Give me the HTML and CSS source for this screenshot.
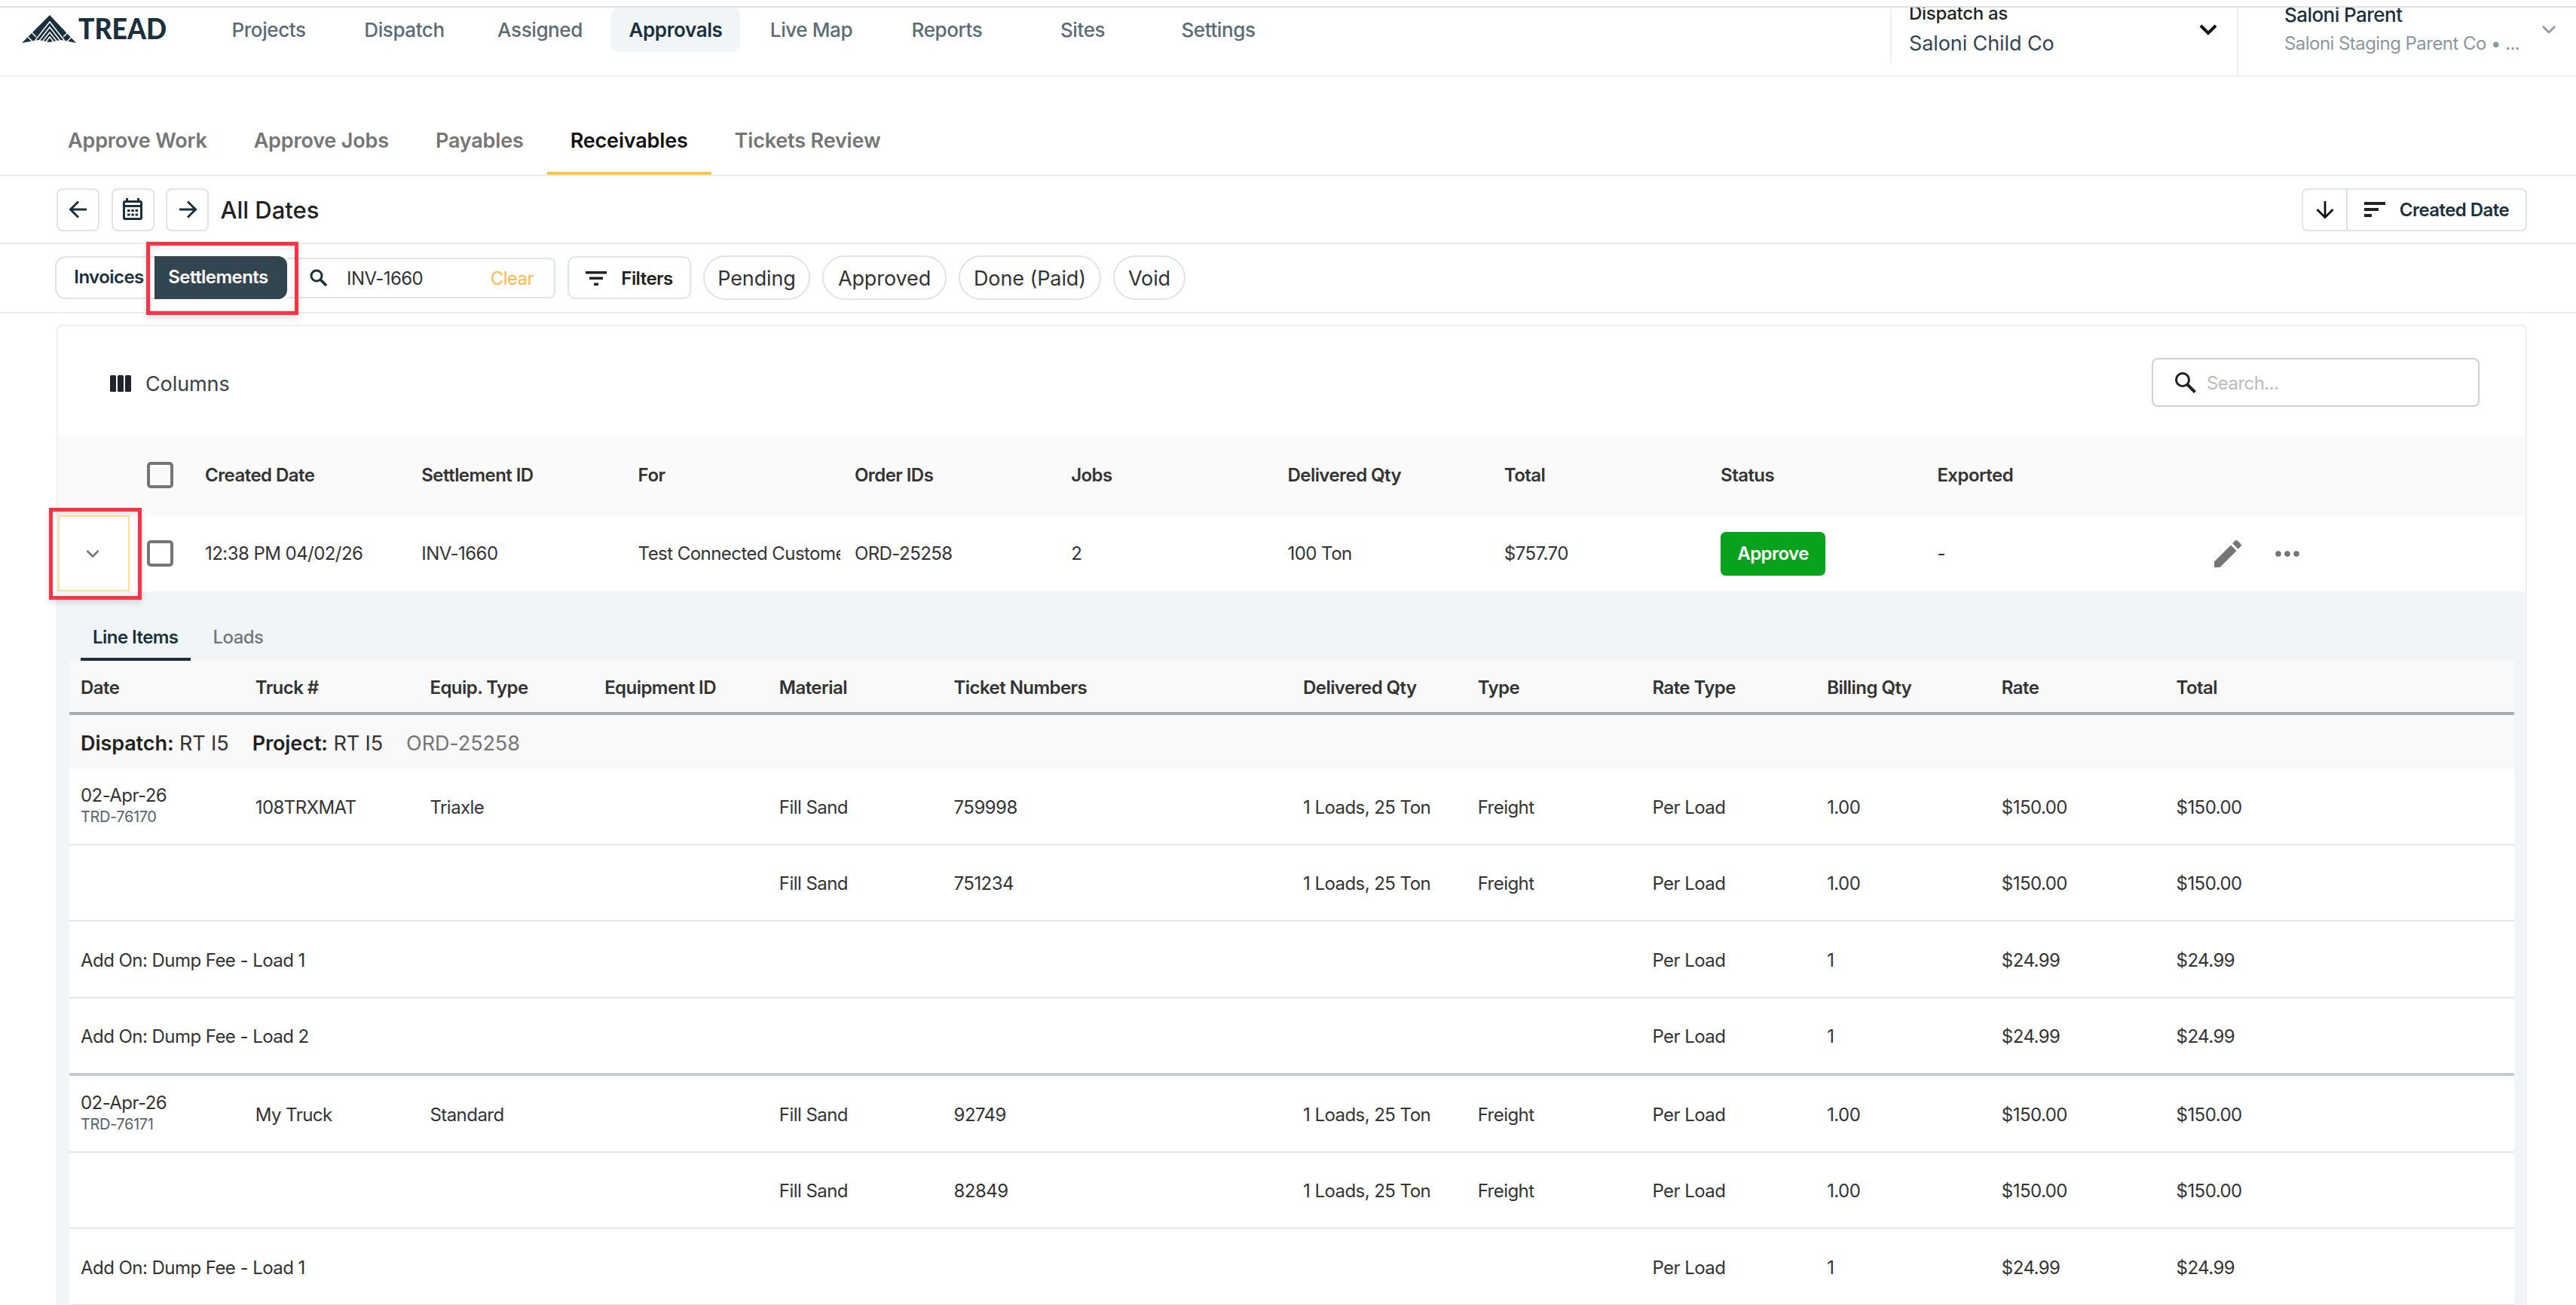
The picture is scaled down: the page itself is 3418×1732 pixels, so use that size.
FILE: index.html
```html
<!DOCTYPE html>
<html lang="en">

<head>
  <meta charset="UTF-8" />
  <meta name="viewport" content="width=device-width, initial-scale=1.0" />
  <title>Tread - Receivables</title>
  <link rel="stylesheet" href="styles.css">
</head>

<body>
  <header class="header">
    <svg class="logo" width="210" height="58" viewBox="0 0 210 58">
      <path class="logo_mark" d="M46 10 L81 47 L61 43 L46 46 L31 43 L9 47 Z" />
      <path class="logo_lines" d="M24 47 L46 19 L68 47 M29 48 L46 26 L63 48 M34 48 L46 33 L58 48 M39 48 L46 39 L53 48 M16 38 L24 46 M22 33 L28 39 M76 38 L68 46 M70 33 L64 39" />
      <text class="logo_text" x="84" y="42" textLength="117" lengthAdjust="spacingAndGlyphs">TREAD</text>
    </svg>
    <nav class="nav">
      <a>Projects</a>
      <a>Dispatch</a>
      <a>Assigned</a>
      <a class="active">Approvals</a>
      <a>Live Map</a>
      <a>Reports</a>
      <a>Sites</a>
      <a>Settings</a>
    </nav>
    <div class="company">
      <div class="company_text">
        <b>Dispatch as</b>
        <span>Saloni Child Co</span>
      </div>
      <svg width="26" height="16" viewBox="0 0 26 16" fill="none" stroke="#111" stroke-width="4"><path d="M3 3 L13 13 L23 3" /></svg>
    </div>
    <div class="user">
      <div class="user_text">
        <b>Saloni Parent</b>
        <span>Saloni Staging Parent Co • ...</span>
      </div>
      <svg width="20" height="12" viewBox="0 0 20 12" fill="none" stroke="#8b979f" stroke-width="2.5"><path d="M2 2 L10 10 L18 2" /></svg>
    </div>
  </header>

  <div class="tabs">
    <a>Approve Work</a>
    <a>Approve Jobs</a>
    <a>Payables</a>
    <a class="active">Receivables</a>
    <a>Tickets Review</a>
  </div>

  <div class="dates">
    <button class="icon_btn">
      <svg width="26" height="26" viewBox="0 0 26 26" fill="none" stroke="#1b303d" stroke-width="3"><path d="M24 13 H4 M13 2.5 L2.5 13 L13 23.5" /></svg>
    </button>
    <button class="icon_btn">
      <svg width="28" height="30" viewBox="0 0 28 30">
        <path d="M5 0 h3 v3 h12 v-3 h3 v3 h1 a3 3 0 0 1 3 3 v20 a3 3 0 0 1 -3 3 h-20 a3 3 0 0 1 -3 -3 v-20 a3 3 0 0 1 3 -3 h1 z M4 12 v14 h20 v-14 z M4 6 v3 h20 v-3 z" fill="#1b303d" fill-rule="evenodd" />
        <path d="M7 15h3.500v3h-3.500z M12.300 15h3.500v3h-3.500z M17.600 15h3.500v3h-3.500z M7 20.500h3.500v3h-3.500z M12.300 20.500h3.500v3h-3.500z M17.600 20.500h3.500v3h-3.500z" fill="#1b303d" />
      </svg>
    </button>
    <button class="icon_btn">
      <svg width="26" height="26" viewBox="0 0 26 26" fill="none" stroke="#1b303d" stroke-width="3"><path d="M2 13 H22 M13 2.500 L23.500 13 L13 23.500" /></svg>
    </button>
    <h1>All Dates</h1>
    <div class="sort">
      <button class="sort_dir">
        <svg width="26" height="26" viewBox="0 0 26 26" fill="none" stroke="#111" stroke-width="2.800"><path d="M13 2 V22 M2.500 13 L13 23.500 L23.500 13" /></svg>
      </button>
      <button class="sort_by">
        <svg width="28" height="20" viewBox="0 0 28 20" fill="#222"><path d="M0 0h28v4h-28z M0 8h19v4h-19z M0 16h10v4h-10z" /></svg>
        Created Date
      </button>
    </div>
  </div>

  <div class="filters">
    <div class="switch">
      <button>Invoices</button>
      <button class="active">Settlements</button>
      <div class="mark mark_settlements"></div>
    </div>
    <div class="query">
      <svg width="24" height="24" viewBox="0 0 24 24" fill="none" stroke="#1b303d" stroke-width="3"><circle cx="9" cy="9" r="7" /><path d="M14 14 L22 22" stroke-width="3.500" /></svg>
      <span class="query_text">INV-1660</span>
      <span class="clear">Clear</span>
    </div>
    <button class="filter_btn">
      <svg width="28" height="19" viewBox="0 0 28 19" fill="#222"><path d="M0 0h28v3.500h-28z M5 7.500h18v3.500h-18z M11 15.500h6v3.500h-6z" /></svg>
      Filters
    </button>
    <button class="chip chip_pending">Pending</button>
    <button class="chip chip_approved">Approved</button>
    <button class="chip chip_done">Done (Paid)</button>
    <button class="chip chip_void">Void</button>
  </div>

  <main class="card">
    <div class="card_top">
      <div class="columns">
        <svg width="28" height="22" viewBox="0 0 28 22" fill="#20242c"><rect width="8" height="22" rx="1.500" /><rect x="10" width="8" height="22" rx="1.500" /><rect x="20" width="8" height="22" rx="1.500" /></svg>
        Columns
      </div>
      <div class="search">
        <svg width="30" height="30" viewBox="0 0 30 30" fill="none" stroke="#222" stroke-width="3"><circle cx="11" cy="11" r="8.500" /><path d="M17 17 L27.500 27.500" stroke-width="4" /></svg>
        Search...
      </div>
    </div>

    <div class="table_row table_head">
      <span></span>
      <span class="check"></span>
      <span>Created Date</span>
      <span>Settlement ID</span>
      <span>For</span>
      <span>Order IDs</span>
      <span>Jobs</span>
      <span>Delivered Qty</span>
      <span>Total</span>
      <span>Status</span>
      <span>Exported</span>
    </div>
    <div class="table_row">
      <span class="expand">
        <svg width="18" height="12" viewBox="0 0 18 12" fill="none" stroke="#757575" stroke-width="2.500"><path d="M1.500 2 L9 9.500 L16.500 2" /></svg>
      </span>
      <span class="check"></span>
      <span>12:38 PM 04/02/26</span>
      <span>INV-1660</span>
      <span>Test Connected Customer</span>
      <span>ORD-25258</span>
      <span>2</span>
      <span>100 Ton</span>
      <span>$757.70</span>
      <span><button class="approve">Approve</button></span>
      <span>-</span>
      <span class="actions">
        <svg width="36" height="36" viewBox="0 0 36 36" fill="#757575"><path d="M0 28.500 V36 H7.500 L29.600 13.900 L22.100 6.400 Z M35.400 8.100 a2 2 0 0 0 0 -2.800 L30.700 0.600 a2 2 0 0 0 -2.800 0 L24.200 4.300 L31.700 11.800 Z" /></svg>
        <svg width="32" height="8" viewBox="0 0 32 8" fill="#757575"><circle cx="4" cy="4" r="3.800" /><circle cx="16" cy="4" r="3.800" /><circle cx="28" cy="4" r="3.800" /></svg>
      </span>
      <div class="mark mark_expand"></div>
    </div>

    <section class="details">
      <div class="details_tabs">
        <a class="active">Line Items</a>
        <a>Loads</a>
      </div>

      <div class="line line_head">
        <span>Date</span>
        <span>Truck #</span>
        <span>Equip. Type</span>
        <span>Equipment ID</span>
        <span>Material</span>
        <span class="wide">Ticket Numbers</span>
        <span>Delivered Qty</span>
        <span>Type</span>
        <span>Rate Type</span>
        <span>Billing Qty</span>
        <span>Rate</span>
        <span>Total</span>
      </div>

      <div class="group">
        <span><b>Dispatch:</b> RT I5</span>
        <span><b>Project:</b> RT I5</span>
        <span class="order">ORD-25258</span>
      </div>

      <div class="line">
        <span class="date">02-Apr-26<small>TRD-76170</small></span>
        <span>108TRXMAT</span>
        <span>Triaxle</span>
        <span></span>
        <span>Fill Sand</span>
        <span class="wide">759998</span>
        <span>1 Loads, 25 Ton</span>
        <span>Freight</span>
        <span>Per Load</span>
        <span>1.00</span>
        <span>$150.00</span>
        <span>$150.00</span>
      </div>
      <div class="line">
        <span class="blank"></span>
        <span>Fill Sand</span>
        <span class="wide">751234</span>
        <span>1 Loads, 25 Ton</span>
        <span>Freight</span>
        <span>Per Load</span>
        <span>1.00</span>
        <span>$150.00</span>
        <span>$150.00</span>
      </div>
      <div class="line">
        <span class="addon">Add On: Dump Fee - Load 1</span>
        <span>Per Load</span>
        <span>1</span>
        <span>$24.99</span>
        <span>$24.99</span>
      </div>
      <div class="line line_last">
        <span class="addon">Add On: Dump Fee - Load 2</span>
        <span>Per Load</span>
        <span>1</span>
        <span>$24.99</span>
        <span>$24.99</span>
      </div>

      <div class="line">
        <span class="date">02-Apr-26<small>TRD-76171</small></span>
        <span>My Truck</span>
        <span>Standard</span>
        <span></span>
        <span>Fill Sand</span>
        <span class="wide">92749</span>
        <span>1 Loads, 25 Ton</span>
        <span>Freight</span>
        <span>Per Load</span>
        <span>1.00</span>
        <span>$150.00</span>
        <span>$150.00</span>
      </div>
      <div class="line">
        <span class="blank"></span>
        <span>Fill Sand</span>
        <span class="wide">82849</span>
        <span>1 Loads, 25 Ton</span>
        <span>Freight</span>
        <span>Per Load</span>
        <span>1.00</span>
        <span>$150.00</span>
        <span>$150.00</span>
      </div>
      <div class="line">
        <span class="addon">Add On: Dump Fee - Load 1</span>
        <span>Per Load</span>
        <span>1</span>
        <span>$24.99</span>
        <span>$24.99</span>
      </div>
    </section>
  </main>
</body>

</html>
```

FILE: styles.css
```css
* {
  box-sizing: border-box;
}

body {
  margin: 0;
  height: 1732px;
  padding-top: 8px;
  overflow: hidden;
  background: #fff;
  font-family: Inter, "Liberation Sans", sans-serif;
  font-size: 24px;
  letter-spacing: -0.55px;
  color: #333;
}

button {
  margin: 0;
  padding: 0;
  font-family: inherit;
  font-size: 24px;
  letter-spacing: -0.55px;
  color: #1b303d;
  background: #fff;
  border: 2px solid #dfe4e8;
}

svg {
  display: block;
  flex: none;
}

/* header */

.header {
  display: flex;
  height: 94px;
  border-top: 2px solid #dedfdf;
  border-bottom: 2px solid #eef0f3;
  overflow: hidden;
}

.logo {
  margin-left: 20px;
}

.logo_mark {
  fill: #1b303d;
}

.logo_lines {
  fill: none;
  stroke: #fff;
  stroke-width: 1.5;
}

.logo_text {
  font-family: Lato, sans-serif;
  font-size: 37px;
  font-weight: 900;
  letter-spacing: 0;
  fill: #1b303d;
}

.nav {
  display: flex;
  gap: 9px;
  margin: -1px 0 0 41px;
}

.nav a {
  width: 171px;
  height: 60px;
  line-height: 61px;
  border-radius: 12px;
  text-align: center;
  font-size: 26px;
  letter-spacing: -0.4px;
  font-weight: 500;
  color: #5b6b75;
}

.nav .active {
  background: #f1f5f8;
  font-weight: 600;
  color: #1b303d;
}

.company {
  display: flex;
  justify-content: space-between;
  width: 460px;
  height: 74px;
  margin-left: auto;
  padding: 0 25px 0 23px;
  border-left: 2px solid #edf0f2;
}

.company svg {
  margin-top: 21px;
}

.company_text {
  display: flex;
  flex-direction: column;
  margin-top: -12px;
  line-height: 40px;
  font-size: 27px;
  letter-spacing: -0.1px;
  color: #33444f;
}

.company_text b {
  font-size: 24px;
  letter-spacing: -0.3px;
  font-weight: 500;
  color: #222;
}

.user {
  display: flex;
  justify-content: space-between;
  width: 450px;
  padding: 0 26px 0 61px;
  border-left: 2px solid #edf0f2;
}

.user svg {
  margin-top: 23px;
}

.user_text {
  display: flex;
  flex-direction: column;
  margin-top: -9px;
  line-height: 38px;
  color: #8b979f;
}

.user_text b {
  font-size: 26px;
  font-weight: 500;
  color: #1b303d;
}

/* page tabs */

.tabs {
  display: flex;
  height: 132px;
  padding: 38px 0 0 59px;
  border-bottom: 2px solid #ececee;
}

.tabs a {
  height: 92px;
  padding: 0 31px;
  line-height: 93px;
  font-size: 27px;
  letter-spacing: -0.17px;
  font-weight: 600;
  color: #757575;
}

.tabs .active {
  color: #111;
  border-bottom: 4px solid #f7c948;
}

/* dates toolbar */

.dates {
  display: flex;
  align-items: center;
  gap: 15.5px;
  height: 90px;
  padding: 0 65px 0 75px;
  border-bottom: 2px solid #ececee;
}

.icon_btn {
  display: flex;
  align-items: center;
  justify-content: center;
  width: 57px;
  height: 57px;
  border-radius: 8px;
}

.dates h1 {
  margin: 0;
  font-size: 31px;
  font-weight: 500;
  letter-spacing: 0;
  color: #222;
}

.sort {
  display: flex;
  margin-left: auto;
}

.sort button {
  display: flex;
  align-items: center;
  justify-content: center;
  height: 57px;
  font-weight: 600;
}

.sort .sort_dir {
  width: 59px;
  border-right: 0;
  border-radius: 8px 0 0 8px;
}

.sort .sort_by {
  gap: 19px;
  width: 240px;
  border-radius: 0 8px 8px 0;
}

/* filters */

.filters {
  display: flex;
  align-items: center;
  height: 92px;
  padding: 0 0 1px 73px;
  border-bottom: 2px solid #ececee;
}

.switch {
  display: flex;
  position: relative;
}

.switch button {
  width: 132px;
  height: 57px;
  padding: 0 0 3px 9px;
  border-right: 0;
  border-radius: 14px 0 0 14px;
  font-weight: 600;
}

.switch .active {
  width: 176px;
  padding: 0 7px 3px 0;
  border: 0;
  border-radius: 0 12px 12px 0;
  background: #334650;
  color: #fff;
}

.mark {
  position: absolute;
  border: 5px solid #ff3344;
  box-shadow: 0 4px 8px rgba(0, 0, 0, 0.12), inset 0 4px 8px rgba(0, 0, 0, 0.08);
}

.mark_settlements {
  left: 121px;
  top: -19px;
  width: 202px;
  height: 97px;
}

.query {
  display: flex;
  align-items: center;
  width: 356px;
  height: 54px;
  padding: 1px 27px 0 30px;
  border: 2px solid #dfe4e8;
  border-left: 0;
  border-radius: 0 8px 8px 0;
}

.query_text {
  margin-left: 25px;
}

.clear {
  margin-left: auto;
  color: #ffb84d;
}

.filter_btn {
  display: flex;
  align-items: center;
  justify-content: center;
  gap: 19px;
  width: 164px;
  height: 57px;
  margin: 0 16px;
  padding-top: 1px;
  border-radius: 10px;
  font-weight: 600;
  color: #222;
}

.chip {
  height: 59px;
  margin-right: 16px;
  padding-top: 2px;
  border-radius: 30px;
  font-size: 27px;
  letter-spacing: -0.1px;
  color: #333;
}

.chip_pending {
  width: 142px;
}

.chip_approved {
  width: 165px;
}

.chip_done {
  width: 189px;
}

.chip_void {
  width: 96px;
}

/* settlements card */

.card {
  width: 3278px;
  height: 1301px;
  margin: 15px 0 0 75px;
  border: 2px solid #f0f0f1;
  border-bottom: 0;
  border-radius: 8px 8px 0 0;
}

.card_top {
  display: flex;
  align-items: center;
  justify-content: space-between;
  height: 146px;
  padding: 0 61px 0 69px;
}

.columns {
  display: flex;
  align-items: center;
  gap: 19px;
  padding-top: 6px;
  font-size: 27px;
  letter-spacing: -0.1px;
  color: #3c4049;
}

.search {
  display: flex;
  align-items: center;
  gap: 13px;
  width: 435px;
  height: 65px;
  margin-bottom: -3px;
  padding: 1px 0 0 28px;
  border: 2px solid #d0d0d0;
  border-radius: 8px;
  color: #bcbcbc;
}

.table_row {
  display: grid;
  grid-template-columns: 95px 92px repeat(9, 287.3px) auto;
  align-items: center;
  height: 101px;
  position: relative;
}

.table_row span {
  margin: 0 11px 0 8px;
  overflow: hidden;
  white-space: nowrap;
}

.table_head {
  height: 105px;
  padding-bottom: 3px;
  background: #fafafa;
  font-weight: 600;
}

.table_row .check {
  width: 35px;
  height: 35px;
  margin: 0 0 0 23px;
  border: 4px solid #757575;
  border-radius: 5px;
}

.table_row .expand {
  display: flex;
  align-items: center;
  justify-content: center;
  height: 101px;
  margin: 0;
  padding-right: 3px;
  border: 2px solid #ffe09a;
}

.approve {
  display: block;
  width: 139px;
  height: 58px;
  border: 0;
  border-radius: 7px;
  background: #09a21c;
  font-weight: 600;
  color: #fff;
}

.table_row .actions {
  display: flex;
  align-items: center;
  gap: 45px;
  margin-left: 88px;
}

.mark_expand {
  left: -12px;
  top: -10px;
  width: 123px;
  height: 122px;
}

/* expanded row */

.details {
  height: 947px;
  padding: 0 15px;
  background: #f1f5f8;
  overflow: hidden;
}

.details_tabs {
  display: flex;
  gap: 14px;
  height: 91px;
  padding: 30px 15px 0;
}

.details_tabs a {
  height: 62px;
  padding: 0 16px;
  line-height: 61px;
  font-weight: 500;
  color: #757575;
}

.details_tabs .active {
  border-bottom: 4px solid #1b303d;
  font-weight: 600;
  color: #1b303d;
  z-index: 1;
}

.line {
  display: grid;
  grid-template-columns: repeat(14, 1fr);
  align-items: center;
  height: 101.5px;
  padding-top: 3px;
  border-bottom: 2px solid #e4e6e7;
  background: #fff;
}

.line span {
  padding-left: 15px;
  white-space: nowrap;
}

.line .wide {
  grid-column: span 2;
}

.line .blank {
  grid-column: span 4;
}

.line .addon {
  grid-column: span 9;
}

.line_head {
  height: 73px;
  border-bottom: 4px solid #a3adb3;
  background: #f9f9f9;
  font-weight: 600;
}

.line_last {
  height: 103.5px;
  border-bottom: 4px solid #c6cccf;
}

.line .date {
  padding-bottom: 2px;
}

.date small {
  display: block;
  font-size: 20px;
  line-height: 29px;
  letter-spacing: -0.4px;
  color: #54646f;
}

.group {
  display: flex;
  align-items: center;
  gap: 31px;
  height: 71px;
  padding: 3px 0 0 15px;
  background: #f9f9f9;
  font-size: 27px;
  letter-spacing: -0.08px;
}

.group b {
  font-weight: 600;
  color: #222;
}

.order {
  color: #757575;
}
```
